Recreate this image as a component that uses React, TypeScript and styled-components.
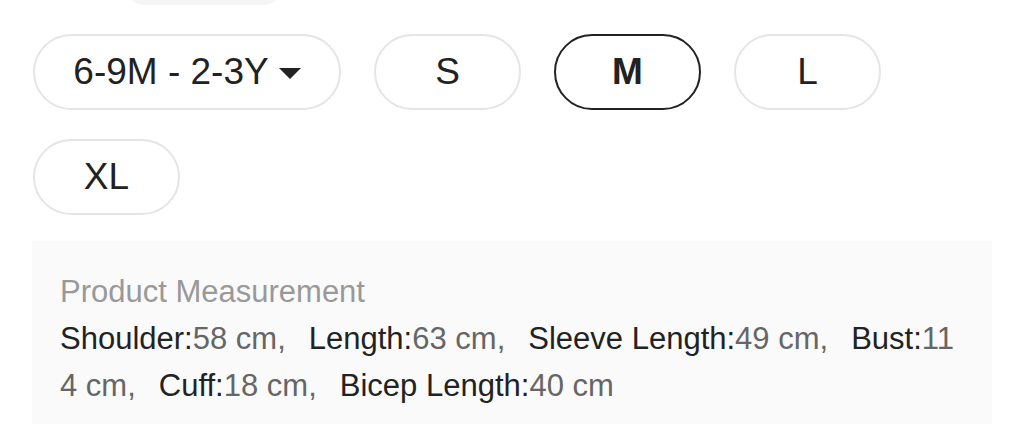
import React from 'react'
import styled, { createGlobalStyle } from 'styled-components'

const GlobalStyle = createGlobalStyle`
	html, body {
		margin: 0;
		padding: 0;
		background: #fff;
		font-family: "Liberation Sans", Arial, sans-serif;
	}
`

interface Measure {
	label: string
	value: string
}

const sizes = ['S', 'M', 'L', 'XL']

const measures: Measure[] = [
	{ label: 'Shoulder', value: '58 cm' },
	{ label: 'Length', value: '63 cm' },
	{ label: 'Sleeve Length', value: '49 cm' },
	{ label: 'Bust', value: '114 cm' },
	{ label: 'Cuff', value: '18 cm' },
	{ label: 'Bicep Length', value: '40 cm' },
]

const App: React.FC = () => {
	const selected = 'M'

	return (
		<StyledPage>
			<GlobalStyle />
			<StyledTopTab />
			<StyledSizeList>
				<StyledPill wide>
					6-9M - 2-3Y
					<StyledCaret viewBox="0 0 22 11">
						<path d="M0 0 H22 L11 11 Z" fill="#222" />
					</StyledCaret>
				</StyledPill>
				{sizes.map((s) => (
					<StyledPill key={s} active={s === selected}>
						{s}
					</StyledPill>
				))}
			</StyledSizeList>
			<StyledMeasureBox>
				<StyledMeasureTitle>Product Measurement</StyledMeasureTitle>
				<StyledMeasureText>
					{measures.map((m, i) => (
						<StyledMeasureItem key={m.label}>
							{m.label}:<StyledValue>{m.value}{i < measures.length - 1 ? ',' : ''}</StyledValue>
						</StyledMeasureItem>
					))}
				</StyledMeasureText>
			</StyledMeasureBox>
		</StyledPage>
	)
}

const StyledPage = styled.div`
	width: 1024px;
	height: 424px;
	overflow: hidden;
	padding: 0 32px;
	box-sizing: border-box;
`

const StyledTopTab = styled.div`
	width: 158px;
	height: 40px;
	margin: -35px 0 0 93px;
	border-radius: 20px;
	background: #f5f5f5;
`

const StyledSizeList = styled.div`
	display: flex;
	flex-wrap: wrap;
	gap: 29px 33px;
	margin-top: 29px;
	padding-left: 1px;
`

const StyledPill = styled.div<{ active?: boolean; wide?: boolean }>`
	display: flex;
	align-items: center;
	justify-content: center;
	gap: 10px;
	box-sizing: border-box;
	width: ${(p) => (p.wide ? '308px' : '147px')};
	height: 76px;
	border-radius: 38px;
	border: 2px solid ${(p) => (p.active ? '#222' : '#e5e5e5')};
	color: #222;
	font-size: 37px;
	font-weight: ${(p) => (p.active ? 700 : 400)};
`

const StyledCaret = styled.svg`
	width: 22px;
	height: 11px;
	margin-top: 2px;
`

const StyledMeasureBox = styled.div`
	margin-top: 26px;
	background: #fafafa;
	padding: 27px 28px 24px;
`

const StyledMeasureTitle = styled.div`
	color: #999;
	font-size: 31px;
	line-height: 47px;
`

const StyledMeasureText = styled.div`
	color: #222;
	font-size: 31px;
	line-height: 47px;
	word-break: break-all;
`

const StyledMeasureItem = styled.span`
	margin-right: 23px;
`

const StyledValue = styled.span`
	color: #666;
`

export default App
